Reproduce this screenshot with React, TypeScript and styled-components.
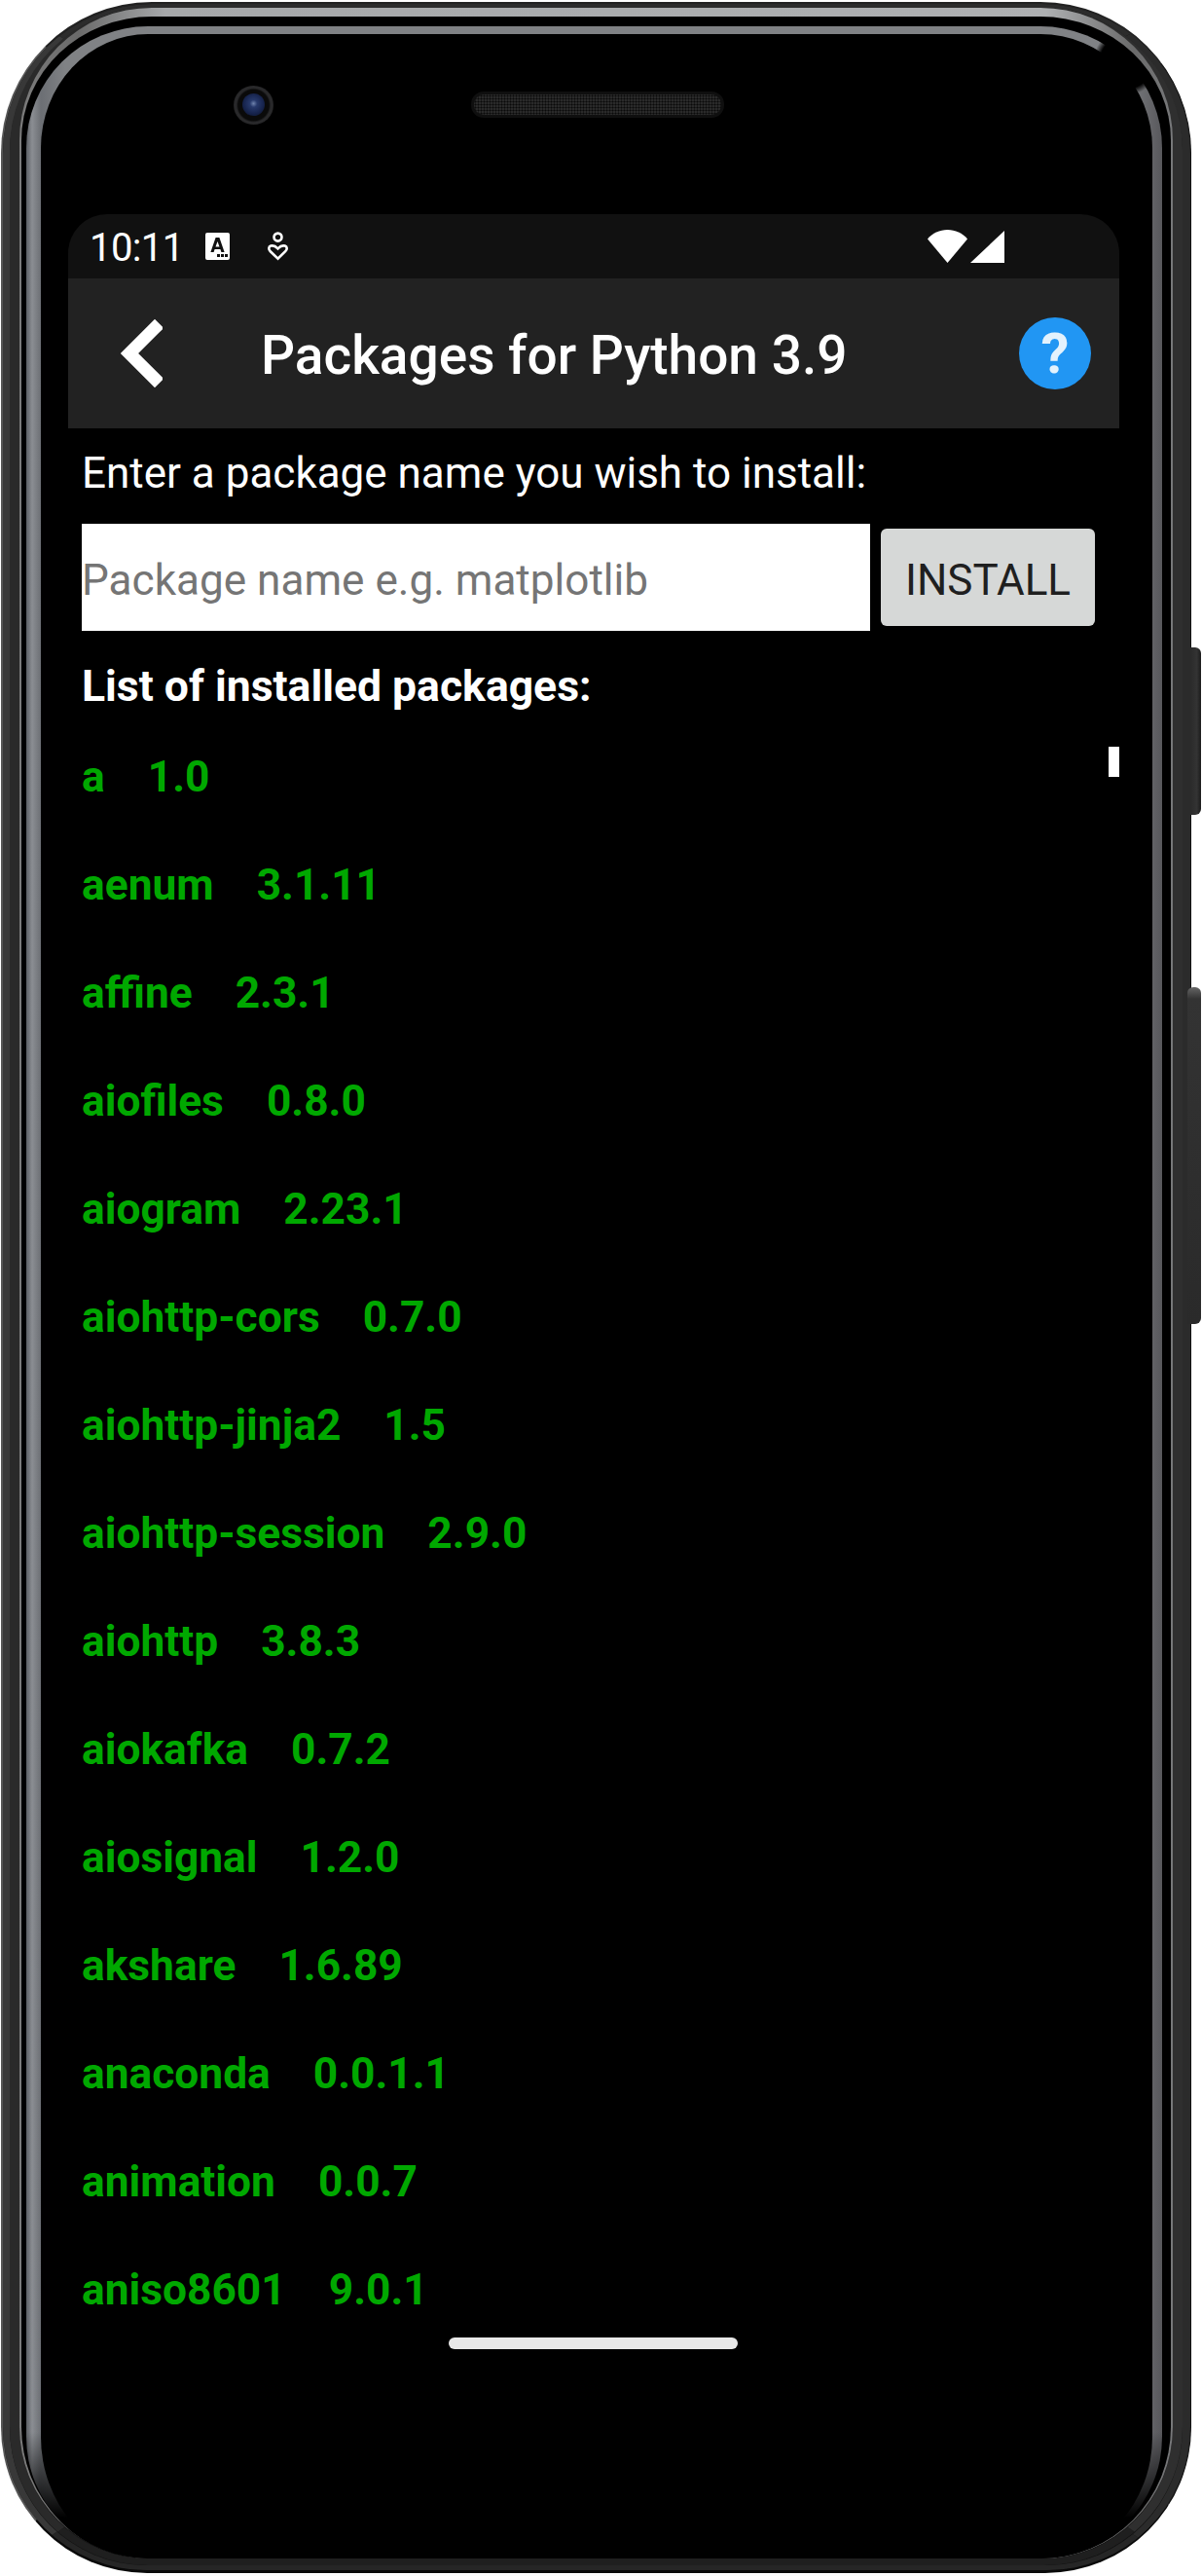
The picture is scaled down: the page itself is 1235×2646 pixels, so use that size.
import React from "react";
import styled, { createGlobalStyle } from "styled-components";

const GlobalStyle = createGlobalStyle`
  html, body { margin: 0; padding: 0; background: #fff; }
  body { font-family: Roboto, "Liberation Sans", sans-serif; }
  #root { width: 1235px; height: 2646px; overflow: hidden; }
`;

const Device = styled.div`
  position: relative;
  width: 1223px;
  height: 2641px;
  margin: 2px 0 0 1px;
`;

const Shell = styled.div`
  box-sizing: border-box;
  height: 100%;
  display: flex;
  border-style: solid;
  border-color: #222 #111 #0a0a0a #555;
  border-width: 2px 1px 3px 2px;
  border-radius: 155px 155px 150px 150px;
  background: #141414;
`;

const OuterBand = styled.div`
  flex: 1;
  display: flex;
  min-width: 0;
  border-style: solid;
  border-color: #2c2c2c #2b2b2b #262626 #383838;
  border-width: 4px 8px 5px 7px;
  border-radius: 153px 153px 147px 147px;
  background: #121212;
`;

const InnerBand = styled.div`
  flex: 1;
  display: flex;
  min-width: 0;
  border-style: solid;
  border-color: #222 #2f2f2f #1f1f1f #2a2a2a;
  border-width: 0 10px 7px 10px;
  border-radius: 146px 146px 142px 142px;
`;

const Rim = styled.div`
  flex: 1;
  display: flex;
  min-width: 0;
  border-style: solid;
  border-color: transparent;
  border-width: 9px 2px 0 2px;
  border-radius: 136px 136px 135px 135px;
  padding: 10px 9px 0 5px;
  background:
    linear-gradient(#000, #000) padding-box,
    linear-gradient(90deg, #7c7c7c 0, #6a6a6a 60px, #a6a8aa 150px, #aeb0b2 calc(100% - 130px), #6a6a6a calc(100% - 40px), #77787a 100%) border-box;
`;

const Bezel = styled.div`
  flex: 1;
  display: flex;
  min-width: 0;
  border-style: solid;
  border-color: transparent;
  border-width: 8px 10px 0 15px;
  border-radius: 125px;
  background:
    linear-gradient(#000, #000) padding-box,
    radial-gradient(circle 34px at calc(100% - 37px) 37px, #000 80%, transparent 100%) border-box,
    linear-gradient(180deg, transparent 95%, #000 98.4%) border-box,
    linear-gradient(90deg, #5d6065 0, #8b8e93 6px, #6c6f74 15px, #808285 40px, #808285 calc(100% - 40px), #58585c 100%) border-box;
`;

const Screen = styled.div`
  flex: 1;
  min-width: 0;
  display: flex;
  flex-direction: column;
  padding: 0 34px 0 28px;
`;

const TopZone = styled.div`
  box-sizing: border-box;
  height: 185px;
  display: flex;
  align-items: center;
  gap: 203px;
  padding: 0 0 40px 170px;
`;

const Camera = styled.div`
  width: 41px;
  height: 40px;
  border-radius: 50%;
  display: flex;
  align-items: center;
  justify-content: center;
  background: radial-gradient(circle, #0a0a0a 55%, #2a2a2c 62%, #1a1a1a 100%);
`;

const Lens = styled.div`
  width: 23px;
  height: 23px;
  border-radius: 50%;
  background: radial-gradient(circle at 50% 45%, #6f83ad 0, #27396b 22%, #16234c 60%, #0b1020 100%);
`;

const Speaker = styled.div`
  box-sizing: border-box;
  width: 260px;
  height: 27px;
  border-radius: 13px;
  border: 3px solid #0f0f0f;
  background-color: #2a2a2a;
  background-image: radial-gradient(circle, #0a0a0a 40%, transparent 55%);
  background-size: 3px 3px;
`;

const StatusBar = styled.div`
  box-sizing: border-box;
  height: 66px;
  display: flex;
  align-items: center;
  padding: 0 118px 0 22px;
  background: #111;
  border-radius: 40px 40px 0 0;
  color: #fff;
`;

const Clock = styled.span`
  font-size: 40px;
  line-height: 66px;
  letter-spacing: -0.6px;
  margin: 4px 22px 0 0;
`;

const StatusIcon = styled.svg<{ $gap?: number }>`
  display: block;
  flex: none;
  margin-right: ${(p) => p.$gap ?? 0}px;
`;

const Spacer = styled.div`
  flex: 1;
`;

const AppBar = styled.div`
  box-sizing: border-box;
  height: 154px;
  display: flex;
  align-items: center;
  padding: 0 29px 0 53px;
  background: #222;
`;

const BackIcon = styled.svg`
  display: block;
  flex: none;
  filter: blur(0.7px);
`;

const Title = styled.h1`
  flex: 1;
  margin: 4px 0 0 101px;
  color: #fff;
  font-size: 55px;
  line-height: 64px;
  font-weight: 500;
  white-space: nowrap;
`;

const HelpButton = styled.div`
  width: 74px;
  height: 74px;
  border-radius: 50%;
  background: #2196f3;
  color: #e3f2fd;
  display: flex;
  align-items: center;
  justify-content: center;
  font-size: 58px;
  font-weight: 700;
  line-height: 74px;
`;

const Content = styled.div`
  position: relative;
  flex: 1;
  min-height: 0;
  padding-left: 14px;
`;

const Prompt = styled.p`
  margin: 20px 0 26px;
  color: #fff;
  font-size: 44px;
  line-height: 52px;
  white-space: nowrap;
`;

const InstallRow = styled.div`
  display: flex;
  align-items: center;
  gap: 11px;
`;

const PackageInput = styled.input`
  box-sizing: border-box;
  width: 810px;
  height: 110px;
  border: 0;
  border-radius: 0;
  padding: 5px 0 0;
  outline: 0;
  background: #fff;
  color: #111;
  font-family: Roboto, sans-serif;
  font-size: 44.1px;
  &::placeholder {
    color: #757575;
    opacity: 1;
  }
`;

const InstallButton = styled.button`
  box-sizing: border-box;
  width: 220px;
  height: 100px;
  border: 0;
  border-radius: 6px;
  padding: 5px 0 0;
  background: #d6d8d7;
  color: #1f1f1f;
  font-family: Roboto, sans-serif;
  font-size: 44px;
`;

const ListHeading = styled.h2`
  margin: 31px 0 12px;
  color: #fff;
  font-size: 44.5px;
  line-height: 52px;
  font-weight: 700;
  white-space: nowrap;
`;

const PackageList = styled.ul`
  list-style: none;
  margin: 0;
  padding: 0;
`;

const PackageRow = styled.li`
  height: 111px;
  color: #00a800;
  font-size: 44.3px;
  line-height: 111px;
  font-weight: 700;
  white-space: pre;
`;

const ScrollThumb = styled.div`
  position: absolute;
  right: 0;
  top: 327px;
  width: 11px;
  height: 31px;
  background: #fff;
`;

const HomeBar = styled.div`
  position: absolute;
  left: 460px;
  top: 2399px;
  width: 297px;
  height: 12px;
  border-radius: 6px;
  background: #e8e8e8;
`;

const VolumeKey = styled.div`
  position: absolute;
  left: 1222px;
  top: 663px;
  width: 11px;
  height: 172px;
  border-radius: 0 6px 6px 0;
  background: linear-gradient(90deg, #2a2a2a, #333 60%, #1c1c1c);
`;

const PowerKey = styled.div`
  position: absolute;
  left: 1219px;
  top: 1012px;
  width: 14px;
  height: 346px;
  border-radius: 6px 6px 6px 0;
  background: linear-gradient(180deg, #666 0, #333 12px, #2a2a2a 100%);
`;

const packages: [string, string][] = [
  ["a", "1.0"],
  ["aenum", "3.1.11"],
  ["affine", "2.3.1"],
  ["aiofiles", "0.8.0"],
  ["aiogram", "2.23.1"],
  ["aiohttp-cors", "0.7.0"],
  ["aiohttp-jinja2", "1.5"],
  ["aiohttp-session", "2.9.0"],
  ["aiohttp", "3.8.3"],
  ["aiokafka", "0.7.2"],
  ["aiosignal", "1.2.0"],
  ["akshare", "1.6.89"],
  ["anaconda", "0.0.1.1"],
  ["animation", "0.0.7"],
  ["aniso8601", "9.0.1"],
];

export default function App() {
  return (
    <>
      <GlobalStyle />
      <Device>
        <Shell>
          <OuterBand>
            <InnerBand>
              <Rim>
                <Bezel>
                  <Screen>
                    <TopZone>
                      <Camera>
                        <Lens />
                      </Camera>
                      <Speaker />
                    </TopZone>
                    <StatusBar>
                      <Clock>10:11</Clock>
                      <StatusIcon width="25" height="28" viewBox="0 0 25 28" $gap={39}>
                        <path fill="#fff" fillRule="evenodd" d="M2 0h21a2 2 0 0 1 2 2v24a2 2 0 0 1-2 2H2a2 2 0 0 1-2-2V2a2 2 0 0 1 2-2zM10.6 5 5.4 20h3.2l1-3h5.8l1 3h3.2L14.4 5zm1.9 4 2 5.4h-4z" />
                        <path fill="#111" d="M12 22h3v3h-3zM16 22h3v3h-3zM20 22h3v3h-3z" />
                      </StatusIcon>
                      <StatusIcon width="21" height="30" viewBox="0 0 21 30" fill="none" stroke="#fff" strokeWidth="2.6">
                        <circle cx="10.5" cy="5.6" r="4" />
                        <path d="M10.5 27.6 2.8 20.2C.6 18 .9 15.4 3.2 14.6 5.5 13.8 8 14.8 10.5 17.4 13 14.8 15.5 13.8 17.8 14.6 20.1 15.4 20.4 18 18.2 20.2Z" />
                      </StatusIcon>
                      <Spacer />
                      <StatusIcon width="41" height="34" viewBox="0 0 41 34" $gap={3}>
                        <path fill="#fff" d="M0 9.5C5 3.5 12.5 0 20.5 0S36 3.5 41 9.5L20.5 34z" />
                      </StatusIcon>
                      <StatusIcon width="35" height="33" viewBox="0 0 35 33">
                        <path fill="#fff" d="M35 0v33H0z" />
                      </StatusIcon>
                    </StatusBar>
                    <AppBar>
                      <BackIcon width="44" height="70" viewBox="0 0 44 70" fill="none" stroke="#fff" strokeWidth="13" strokeLinecap="square">
                        <path d="M36 9 10 35l26 26" />
                      </BackIcon>
                      <Title>Packages for Python 3.9</Title>
                      <HelpButton>?</HelpButton>
                    </AppBar>
                    <Content>
                      <Prompt>Enter a package name you wish to install:</Prompt>
                      <InstallRow>
                        <PackageInput placeholder="Package name e.g. matplotlib" />
                        <InstallButton>INSTALL</InstallButton>
                      </InstallRow>
                      <ListHeading>List of installed packages:</ListHeading>
                      <PackageList>
                        {packages.map(([name, version]) => (
                          <PackageRow key={name}>{`${name}    ${version}`}</PackageRow>
                        ))}
                      </PackageList>
                      <ScrollThumb />
                    </Content>
                  </Screen>
                </Bezel>
              </Rim>
            </InnerBand>
          </OuterBand>
        </Shell>
        <HomeBar />
        <VolumeKey />
        <PowerKey />
      </Device>
    </>
  );
}
